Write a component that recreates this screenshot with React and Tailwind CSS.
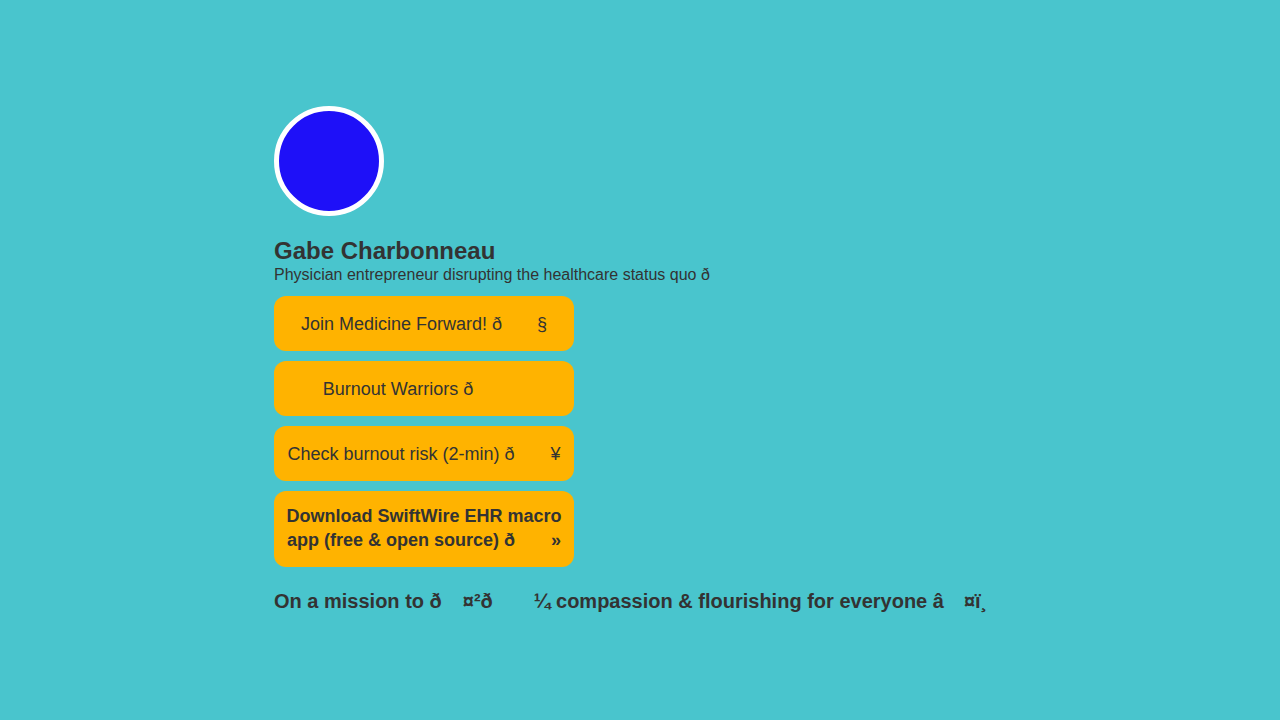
function Gap({ className }) {
  return <span className={"inline-block " + className}></span>;
}

export default function App() {
  const links = [
    {
      key: "join",
      className: "pt-[15px] pb-[13px] leading-[27px]",
      content: (
        <>
          {"Join Medicine Forward! \u00f0"}
          <Gap className="w-[35px]" />
          {"\u00a7"}
        </>
      ),
    },
    {
      key: "warriors",
      className: "pt-[15px] pb-[13px] leading-[27px]",
      content: (
        <>
          {"Burnout Warriors \u00f0"}
          <Gap className="w-[52px]" />
        </>
      ),
    },
    {
      key: "risk",
      className: "pt-[15px] pb-[13px] leading-[27px]",
      content: (
        <>
          {"Check burnout risk (2-min) \u00f0"}
          <Gap className="w-[36px]" />
          {"\u00a5"}
        </>
      ),
    },
    {
      key: "swiftwire",
      className: "pt-[13px] pb-[15px] leading-[24px] font-bold",
      content: (
        <>
          <span className="whitespace-nowrap">Download SwiftWire EHR macro</span>
          <br />
          <span className="whitespace-nowrap">
            {"app (free & open source) \u00f0"}
            <Gap className="w-[36px]" />
            {"\u00bb"}
          </span>
        </>
      ),
    },
  ];

  return (
    <div className="min-h-screen w-full bg-[#49c5cd] text-[#333333] font-['Liberation_Sans',Arial,sans-serif]">
      <div className="w-[732px] mx-auto pt-[106px]">
        {/* avatar */}
        <div className="w-[110px] h-[110px] rounded-full border-[5px] border-white bg-[#1e10f8]"></div>

        <h1 className="mt-[21px] text-[24px] leading-[28px] font-bold">Gabe Charbonneau</h1>
        <p className="text-[16px] leading-[20px]">
          {"Physician entrepreneur disrupting the healthcare status quo \u00f0"}
        </p>

        <div className="mt-[11px] flex flex-col gap-[10px] w-[300px]">
          {links.map((link) => (
            <a
              key={link.key}
              href="#"
              className={"block bg-[#ffb300] rounded-[12px] px-[12px] text-center text-[18px] " + link.className}
            >
              {link.content}
            </a>
          ))}
        </div>

        <p className="mt-[22px] text-[20px] leading-[24px] font-bold whitespace-nowrap">
          {"On a mission to \u00f0"}
          <Gap className="w-[21px]" />
          {"\u00a4\u00b2\u00f0"}
          <Gap className="w-[41px]" />
          {"\u00bc compassion & flourishing for everyone \u00e2"}
          <Gap className="w-[20px]" />
          {"\u00a4\u00ef\u00b8"}
        </p>
      </div>
    </div>
  );
}
